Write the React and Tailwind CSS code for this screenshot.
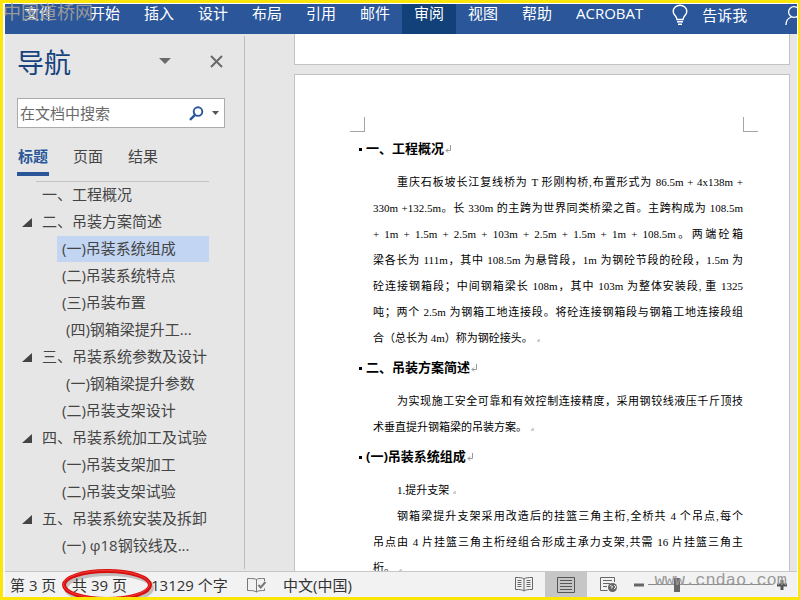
import cx from "clsx";

const RIBBON_TABS = ["开始", "插入", "设计", "布局", "引用", "邮件", "审阅", "视图", "帮助"];

const OUTLINE = [
  { text: "一、工程概况", level: 1 },
  { text: "二、吊装方案简述", level: 1, open: true },
  { text: "(一)吊装系统组成", level: 2, active: true },
  { text: "(二)吊装系统特点", level: 2 },
  { text: "(三)吊装布置", level: 2 },
  { text: "(四)钢箱梁提升工...", level: 2, spaced: true },
  { text: "三、吊装系统参数及设计", level: 1, open: true },
  { text: "(一)钢箱梁提升参数", level: 2, spaced: true },
  { text: "(二)吊装支架设计", level: 2 },
  { text: "四、吊装系统加工及试验", level: 1, open: true },
  { text: "(一)吊装支架加工", level: 2 },
  { text: "(二)吊装支架试验", level: 2 },
  { text: "五、吊装系统安装及拆卸", level: 1, open: true },
  { text: "(一) φ18钢铰线及...", level: 2 },
];

const SECTIONS = [
  {
    title: "一、工程概况",
    paragraphs: [
      [
        "重庆石板坡长江复线桥为 T 形刚构桥,布置形式为 86.5m + 4x138m +",
        "330m +132.5m。长 330m 的主跨为世界同类桥梁之首。主跨构成为 108.5m",
        "+ 1m + 1.5m + 2.5m + 103m + 2.5m + 1.5m + 1m + 108.5m。两端砼箱",
        "梁各长为 111m，其中 108.5m 为悬臂段，1m 为钢砼节段的砼段，1.5m 为",
        "砼连接钢箱段；中间钢箱梁长 108m，其中 103m 为整体安装段, 重 1325",
        "吨；两个 2.5m 为钢箱工地连接段。将砼连接钢箱段与钢箱工地连接段组",
        "合（总长为 4m）称为钢砼接头。",
      ],
    ],
  },
  {
    title: "二、吊装方案简述",
    paragraphs: [
      [
        "为实现施工安全可靠和有效控制连接精度，采用钢铰线液压千斤顶技",
        "术垂直提升钢箱梁的吊装方案。",
      ],
    ],
  },
  {
    title: "(一)吊装系统组成",
    paragraphs: [
      ["1.提升支架"],
      [
        "钢箱梁提升支架采用改造后的挂篮三角主桁,全桥共 4 个吊点,每个",
        "吊点由 4 片挂篮三角主桁经组合形成主承力支架,共需 16 片挂篮三角主",
        "桁。",
      ],
    ],
  },
];

const Ribbon = () => (
  <header className="relative flex h-[30px] shrink-0 overflow-hidden bg-[#2b579a] text-white">
    <button type="button" className="w-[73px] shrink-0 pb-3 pl-[19px] text-left leading-[18px]">
      文件
    </button>
    {RIBBON_TABS.map((tab) => (
      <button
        key={tab}
        type="button"
        className={cx(
          "w-[54px] shrink-0 pb-3 leading-[18px]",
          tab === "审阅" && "bg-[#124078]"
        )}
      >
        {tab}
      </button>
    ))}
    <button type="button" className="shrink-0 px-3 pb-3 leading-[18px]">
      ACROBAT
    </button>
    <button type="button" className="flex shrink-0 items-center gap-[14px] pb-2 pl-[17px]">
      <svg width="16" height="22" viewBox="0 0 16 22" fill="none" stroke="currentColor" strokeWidth="1.4">
        <path d="M5 15.5C5 12 1.2 11 1.2 7.5a6.8 6.3 0 0 1 13.6 0C14.8 11 11 12 11 15.5zM5 17.8h6M6 20.2h4" />
      </svg>
      <span className="leading-[22px]">告诉我</span>
    </button>
    <button type="button" aria-label="账户" className="ml-auto w-3 shrink-0 overflow-hidden pb-2">
      <svg width="20" height="22" viewBox="0 0 20 22" fill="none" stroke="currentColor" strokeWidth="1.3">
        <circle cx="9" cy="8" r="5.4" />
        <path d="M1 21c0-4 2-7 5.5-8M17 21c0-4-2-7-5.5-8" />
      </svg>
    </button>
  </header>
);

const NavigationPane = () => (
  <aside className="w-[240px] shrink-0 py-[2px]">
    <div className="h-full overflow-hidden border-r border-[#bcbcbc]">
      <div className="flex h-[62px] items-center pl-3 pr-[21px] pb-2">
        <h1 className="text-[27px] leading-[36px] text-[#16437e]">导航</h1>
        <button type="button" aria-label="窗格选项" className="mb-1 ml-auto">
          <svg width="12" height="6" viewBox="0 0 12 6" fill="#6a6a6a">
            <path d="M0 0h12L6 6z" />
          </svg>
        </button>
        <button type="button" aria-label="关闭" className="mb-1 ml-[39px]">
          <svg width="13" height="13" viewBox="0 0 13 13" stroke="#6a6a6a" strokeWidth="2">
            <path d="M1 1l11 11M12 1L1 12" />
          </svg>
        </button>
      </div>

      <div className="ml-3 mr-[19px] flex h-[30px] items-center border border-[#ababab] bg-white pl-[2px] pr-[5px]">
        <input
          type="text"
          aria-label="在文档中搜索"
          placeholder="在文档中搜索"
          className="min-w-0 flex-1 bg-transparent outline-none placeholder:text-[#6a6a6a]"
        />
        <button type="button" aria-label="搜索">
          <svg width="15" height="15" viewBox="0 0 15 15" fill="none" stroke="#2b579a">
            <circle cx="9" cy="5.6" r="4.3" strokeWidth="1.9" />
            <path d="M6 8.8L1 13.8" strokeWidth="2.4" />
          </svg>
        </button>
        <button type="button" aria-label="搜索选项" className="ml-2">
          <svg width="7" height="4" viewBox="0 0 7 4" fill="#555">
            <path d="M0 0h7L3.5 4z" />
          </svg>
        </button>
      </div>

      <div className="flex gap-[23px] pl-3 pt-[16px]">
        <button type="button" className="h-[32px] w-8 border-b-4 border-[#2b579a] pb-1 font-bold leading-6 text-[#2b579a]">
          标题
        </button>
        <button type="button" className="h-[32px] w-8 pb-2 leading-6">页面</button>
        <button type="button" className="h-[32px] w-8 pb-2 leading-6">结果</button>
      </div>

      <ul className="mt-[5px] ml-[31px] mr-[35px] border-t border-[#c3c3c3]">
        {OUTLINE.map((item) => (
          <li key={item.text} className="-ml-[14px] mb-px flex h-[26px] items-center">
            <span className="w-5 shrink-0">
              {item.open && (
                <svg width="10" height="9" viewBox="0 0 10 9" fill="#444">
                  <path d="M10 0v9H0z" />
                </svg>
              )}
            </span>
            <a
              href="#doc"
              className={cx(
                "flex-1 whitespace-nowrap pb-[2px] leading-6",
                item.level === 2 && "ml-[15px]",
                item.level === 2 && (item.spaced ? "pl-[9px]" : "pl-[5px]"),
                item.active && "bg-[#c2d5f2]"
              )}
            >
              {item.text}
            </a>
          </li>
        ))}
      </ul>
    </div>
  </aside>
);

const ParagraphEnd = () => (
  <span className="ml-1 inline-block size-[3px] border-b-2 border-r-2 border-[#d0d0d0]" />
);

const SectionHeading = ({ children }) => (
  <h2 className="flex h-[37px] items-center pb-[3px] pl-[64px] text-[13px] font-bold">
    <span className="mr-1 size-[3px] bg-black" />
    {children}
    <svg className="ml-px" width="6" height="8" viewBox="0 0 6 8" fill="none" stroke="#999">
      <path d="M5.5 0v5.5H1M3 3.5l-2 2 2 2" />
    </svg>
  </h2>
);

const DocumentView = () => (
  <main id="doc" className="flex min-w-0 flex-1 flex-col gap-[9px] overflow-hidden pl-[49px] pr-[7px]">
    <div className="h-[31px] shrink-0 border border-t-0 border-[#c3c3c3] bg-white" />
    <article className="flex-1 border border-b-0 border-[#c3c3c3] bg-white text-black">
      <div className="flex h-[57px] items-end justify-between pl-[55px] pr-[31px]">
        <span className="size-[15px] border-b border-r border-[#a5a5a5]" />
        <span className="size-[15px] border-b border-l border-[#a5a5a5]" />
      </div>
      {SECTIONS.map((section) => (
        <section key={section.title}>
          <SectionHeading>{section.title}</SectionHeading>
          {section.paragraphs.map((lines) => (
            <p
              key={lines[0]}
              className="pl-[78px] pr-[46px] font-['Liberation_Serif','Noto_Sans_CJK_SC',serif] text-[11px] leading-[26px]"
            >
              {lines.map((line, i) => {
                const last = i === lines.length - 1;
                return (
                  <span
                    key={line}
                    className={cx(
                      "block h-[26px]",
                      i === 0 && "pl-6",
                      !last && "[text-align-last:justify]"
                    )}
                  >
                    {line}
                    {last && <ParagraphEnd />}
                  </span>
                );
              })}
            </p>
          ))}
        </section>
      ))}
    </article>
  </main>
);

const StatusBar = () => (
  <footer className="relative flex h-[26px] shrink-0 items-center border-t border-[#c6c6c6] bg-[#f2f2f2] pl-[5px] leading-6 text-[#333]">
    <span className="w-[62px] whitespace-nowrap">第 3 页</span>
    <span className="relative w-[74px] whitespace-nowrap">
      共 39 页
      {/* red ring around the page count */}
      <svg
        className="absolute -left-[12px] -top-[5px] overflow-visible"
        width="94"
        height="36"
        viewBox="0 0 94 36"
        fill="none"
      >
        <ellipse cx="49" cy="20" rx="43" ry="14" stroke="#000" strokeOpacity=".2" strokeWidth="4" />
        <ellipse cx="47" cy="17" rx="43" ry="14" stroke="#d90f0f" strokeWidth="4" />
        <ellipse cx="46.500" cy="16.500" rx="43" ry="14" stroke="#ff5a50" strokeOpacity=".6" strokeWidth="1" />
      </svg>
    </span>
    <span className="w-[101px] whitespace-nowrap pl-[5px]">13129 个字</span>
    <button type="button" aria-label="校对" className="w-9">
      <svg width="19" height="16" viewBox="0 0 19 16" fill="none" stroke="#777">
        <path d="M9.5 2.5C8 1.5 5 1.5.5 1.5v12c4 0 7 0 9 1.5 1-1 3-1.5 8-1.5v-2M9.5 2.5V15M9.5 2.5c1-1 3-1 8-1V4" />
        <path d="M11.5 8l2.2 2.5L18.5 5" strokeWidth="2" />
      </svg>
    </button>
    <button type="button" className="whitespace-nowrap">中文(中国)</button>

    <div className="ml-auto flex h-full items-center pr-[10px]">
      <button type="button" aria-label="阅读视图" className="mr-3">
        <svg width="18" height="15" viewBox="0 0 18 15" fill="none" stroke="#666">
          <path d="M9 2C7 .5 5 .5.5.5v12C5 12.500 7 12.500 9 14c2-1.500 4-1.500 8.500-1.500V.5C13 .5 11 .5 9 2zM9 2v12" />
          <path d="M2.500 3.500h4M2.500 5.500h4M2.500 7.500h4M2.500 9.500h4M11.500 3.500h4M11.500 5.500h4M11.500 7.500h4M11.500 9.500h4" />
        </svg>
      </button>
      <button type="button" aria-label="页面视图" className="flex h-full w-[42px] items-center justify-center bg-[#c6c6c6]">
        <svg width="18" height="16" viewBox="0 0 18 16" fill="none" stroke="#555">
          <path d="M.5.5h17v15H.5zM3 3.500h12M3 6.500h12M3 9.500h12M3 12.500h12" />
        </svg>
      </button>
      <button type="button" aria-label="Web 版式" className="ml-[13px]">
        <svg width="18" height="16" viewBox="0 0 18 16" fill="none" stroke="#666">
          <path d="M14.500 5V.5H.5v13h7M3 3.500h9M3 6.500h7M3 9.500h4" />
          <circle cx="12.500" cy="10.500" r="4.500" fill="#666" stroke="none" />
          <path d="M10 8.500l2.500 1-1 2M14 8l2 2-2 2" stroke="#f2f2f2" />
        </svg>
      </button>
      <button type="button" aria-label="缩小" className="ml-4">
        <svg width="10" height="10" viewBox="0 0 10 10" stroke="#666" strokeWidth="3">
          <path d="M0 5h10" />
        </svg>
      </button>
      <input
        type="range"
        aria-label="缩放"
        min="0"
        max="100"
        defaultValue="22"
        className="mx-1 h-[14px] w-[125px] appearance-none bg-[linear-gradient(#8a8a8a,#8a8a8a)] bg-[length:100%_1px] bg-center bg-no-repeat [&::-webkit-slider-thumb]:h-[14px] [&::-webkit-slider-thumb]:w-[6px] [&::-webkit-slider-thumb]:appearance-none [&::-webkit-slider-thumb]:bg-[#666]"
      />
      <button type="button" aria-label="放大">
        <svg width="10" height="10" viewBox="0 0 10 10" stroke="#555" strokeWidth="3">
          <path d="M0 5h10M5 0v10" />
        </svg>
      </button>
    </div>
    <span className="pointer-events-none absolute bottom-1 right-[10px] font-['Liberation_Mono',monospace] text-[17px] text-[#999]">
      www.cndao.com
    </span>
  </footer>
);

export default function App() {
  return (
    <div className="relative flex h-screen flex-col overflow-hidden border-y-3 border-l-3 border-r-2 border-[#fce60a] bg-white pt-px pr-px pl-[2px] font-['Open_Sans','Noto_Sans_CJK_SC',sans-serif] text-[15px] text-[#444]">
      <Ribbon />
      <div className="flex min-h-0 flex-1 bg-[#e6e6e6]">
        <NavigationPane />
        <DocumentView />
      </div>
      <StatusBar />
      <span className="pointer-events-none absolute left-0 top-0 font-['Liberation_Serif','Noto_Sans_CJK_SC',serif] text-[18px] leading-[20px] text-[#9a9a9a]">
        中国道桥网
      </span>
    </div>
  );
}
